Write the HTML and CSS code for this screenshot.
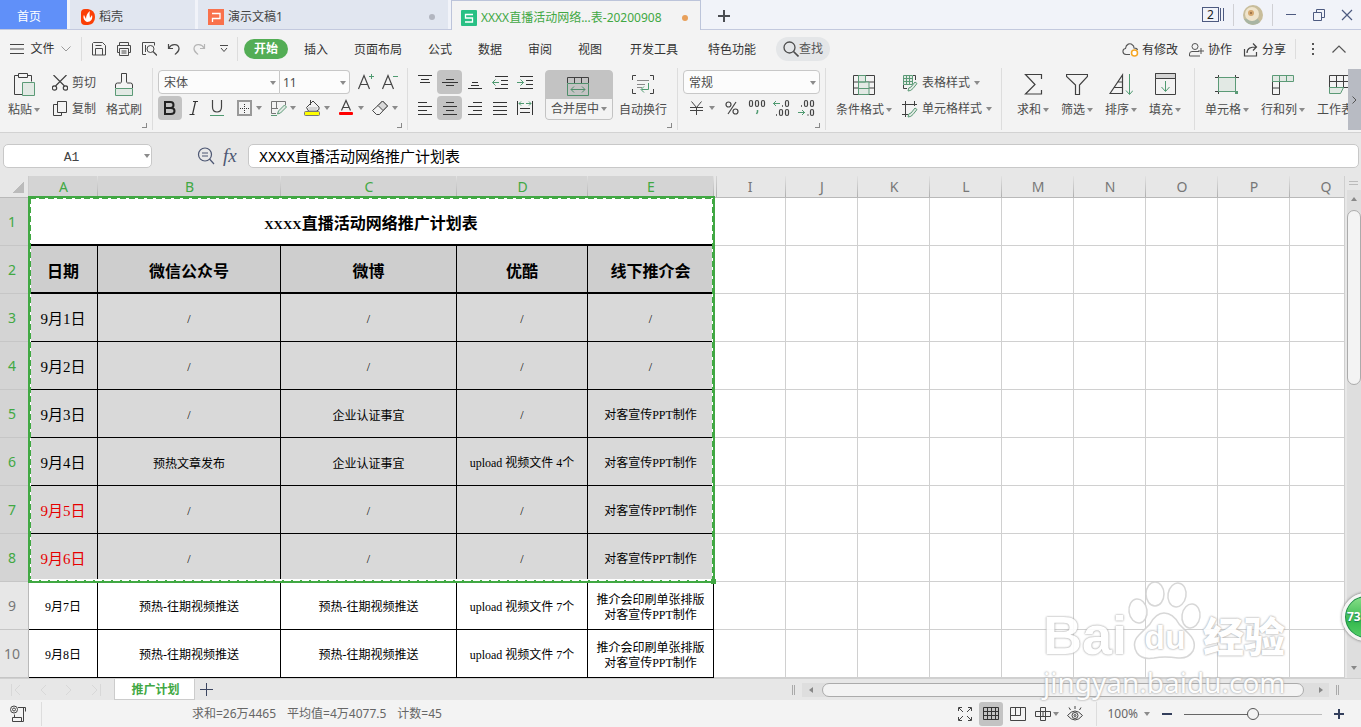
FILE: index.html
```html
<!DOCTYPE html>
<html lang="zh-CN">
<head>
<meta charset="utf-8">
<title>XXXX直播活动网络推广计划表-20200908</title>
<link rel="stylesheet" href="styles.css">
</head>
<body>
<div class="app">

<header class="titlebar">
  <button class="doc home">首页</button>
  <button class="doc docer">
    <svg width="14" height="16" viewBox="0 0 14 16"><path d="M0 4q0-4 4-4h3q7 1 7 8t-7 8H4q-4 0-4-4z" fill="#fb3f07"/><path d="M6 13C2 11 2 7 3 6l2 4c0-3 1-6 4-8-1 3 0 5 0 7l2-3c1 4-1 7-5 7z" fill="#fff"/></svg>
    <span>稻壳</span>
  </button>
  <button class="doc ppt">
    <svg width="16" height="16" viewBox="0 0 16 16"><rect width="16" height="16" fill="#f9714c"/><path d="M4.500 13V9.500h7.500v-5H4" fill="none" stroke="#fff" stroke-width="1.300"/></svg>
    <span>演示文稿1</span><i class="dot"></i>
  </button>
  <button class="doc current">
    <svg width="16" height="16" viewBox="0 0 16 16"><rect width="16" height="16" rx="1" fill="#29c084"/><path d="M12 4.500H4.500v3.500h7v4H4" fill="none" stroke="#fff" stroke-width="1.300"/></svg>
    <span>XXXX直播活动网络...表-20200908</span><i class="dot orange"></i>
  </button>
  <button class="newtab" aria-label="新建"><svg width="12" height="12" viewBox="0 0 12 12"><path d="M6 0v12M0 6h12" stroke="#4b4d52" stroke-width="2"/></svg></button>
  <div class="window">
    <button class="count"><span>2</span><i></i></button>
    <i class="fade"></i>
    <button aria-label="用户"><svg width="20" height="20" viewBox="0 0 20 20"><circle cx="10" cy="10" r="10" fill="#c8bd9b"/><path d="M1 14a10 10 0 0 0 16 3l-3-4z" fill="#a9b5a3"/><circle cx="9" cy="9" r="7" fill="#efe4cc"/><circle cx="8" cy="8" r="3" fill="#d5a870"/><circle cx="8" cy="8" r="1" fill="#8f6742"/></svg></button>
    <i class="fade"></i>
    <button class="win" aria-label="最小化"><svg width="12" height="12" viewBox="0 0 12 12"><path d="M1 5.500h10" stroke="#4d5a80"/></svg></button>
    <button class="win" aria-label="还原"><svg width="12" height="12" viewBox="0 0 12 12"><path d="M.5 3.500h8v8h-8zM3.500 3.500v-3h8v8h-3" fill="none" stroke="#4d5a80"/></svg></button>
    <button class="win" aria-label="关闭"><svg width="12" height="12" viewBox="0 0 12 12"><path d="M1 1l10 10M11 1L1 11" stroke="#4d5a80" stroke-width="1.200"/></svg></button>
  </div>
</header>

<nav class="menu">
  <button class="file">
    <svg width="14" height="10" viewBox="0 0 14 10"><path d="M0 .5h14M0 5h14M0 9.500h14" stroke="#444"/></svg>
    <span>文件</span>
    <svg width="10" height="6" viewBox="0 0 10 6"><path d="M.5.500L5 5 9.500.500" fill="none" stroke="#999"/></svg>
  </button>
  <div class="quick">
    <button aria-label="保存"><svg width="16" height="16" viewBox="0 0 16 16"><path d="M2.500 1.500h9l3 3v9.500h-13V2.500zM4.500 14V7.500h7V14M4.500 4.500h6" fill="none" stroke="#4a4a4a"/></svg></button>
    <button aria-label="打印"><svg width="16" height="16" viewBox="0 0 16 16"><path d="M3.500 4.500v-3h9v3M3.500 11.500h-2v-7h13v7h-2M3.500 7.500h9v7h-9zM5.500 10h5M5.500 12h5" fill="none" stroke="#4a4a4a"/></svg></button>
    <button aria-label="打印预览"><svg width="16" height="16" viewBox="0 0 16 16"><path d="M5 13.500H1.500v-12h12v3M4.500 4v7" fill="none" stroke="#4a4a4a"/><circle cx="9.500" cy="8" r="3.500" fill="none" stroke="#4a4a4a"/><path d="M12 10.500l4 4" stroke="#4a4a4a" stroke-width="1.300"/></svg></button>
    <button aria-label="撤销"><svg width="16" height="16" viewBox="0 0 16 16"><path d="M2.500 3v4.500H7M3 7c2-4 9-5 10 0 .5 4-3 5-4 6.500" fill="none" stroke="#4a4a4a" stroke-width="1.200"/></svg></button>
    <button aria-label="恢复"><svg width="16" height="16" viewBox="0 0 16 16"><path d="M13.500 3v4.500H9M13 7c-2-4-9-5-10 0-.5 4 3 5 4 6.500" fill="none" stroke="#b5b5b5" stroke-width="1.200"/></svg></button>
    <button aria-label="自定义"><svg width="10" height="8" viewBox="0 0 10 8"><path d="M1 .5h8M2 3l3 3.500L8 3" fill="none" stroke="#4a4a4a"/></svg></button>
  </div>
  <div class="tabs">
    <button class="on">开始</button><button>插入</button><button>页面布局</button><button>公式</button><button>数据</button><button>审阅</button><button>视图</button><button class="far">开发工具</button><button class="far">特色功能</button>
  </div>
  <button class="search"><svg width="16" height="16" viewBox="0 0 16 16"><circle cx="6.500" cy="6.500" r="5.500" fill="none" stroke="#4d4d4d" stroke-width="1.300"/><path d="M10.500 10.500l5 5" stroke="#4d4d4d" stroke-width="1.600"/></svg>查找</button>
  <div class="cloud">
    <button><svg width="17" height="15" viewBox="0 0 17 15"><path d="M8 12.500H4C0 12 0 7 3.500 6.500 4 2 8 .5 10.500 3c1 .5 1.500 2 1.500 3q3 0 3.500 2" fill="none" stroke="#555" stroke-width="1.100"/><circle cx="12.500" cy="11" r="3" fill="#fff" stroke="#f5a623" stroke-width="1.500"/></svg>有修改</button>
    <button><svg width="16" height="14" viewBox="0 0 16 14"><circle cx="6" cy="3.500" r="3" fill="none" stroke="#555"/><path d="M10 8.500H3q-2.500 0-2.500 2.500v2H11M12 5v6M9 8h6" fill="none" stroke="#555"/></svg>协作</button>
    <button><svg width="16" height="14" viewBox="0 0 16 14"><path d="M1.500 6v7h12V9M4 10c0-5 4-6 9-6M10 .5L13.500 4 10 7.500" fill="none" stroke="#444" stroke-width="1.200"/></svg>分享</button>
  </div>
  <div class="tail">
    <button aria-label="更多"><svg width="4" height="14" viewBox="0 0 4 14"><path d="M1 1h2v2H1zM1 6h2v2H1zM1 11h2v2H1z" fill="#555"/></svg></button>
    <button aria-label="折叠"><svg width="14" height="8" viewBox="0 0 14 8"><path d="M.5 7.500L7 1l6.500 6.500" fill="none" stroke="#555" stroke-width="1.200"/></svg></button>
  </div>
</nav>

<section class="ribbon">
  <div class="group clip">
    <button class="big paste"><svg width="22" height="26" viewBox="0 0 22 26"><path d="M5.500 3.500h-4v19h8M14.500 3.500h4v6M5.500 1.500h9v4h-9z" fill="none" stroke="#404040"/><path d="M9.500 10.500h12v13h-12z" fill="#e2e9e4" stroke="#5b9a76"/></svg><span>粘贴<i class="caret"></i></span></button>
    <div class="stack">
      <button><svg width="16" height="16" viewBox="0 0 16 16"><path d="M1.500 0l11 11M14.500 0l-11 11" stroke="#404040" stroke-width="1.200"/><circle cx="2.500" cy="13" r="2.200" fill="none" stroke="#404040" stroke-width="1.200"/><circle cx="13.500" cy="13" r="2.200" fill="none" stroke="#404040" stroke-width="1.200"/></svg>剪切</button>
      <button><svg width="16" height="16" viewBox="0 0 16 16"><path d="M5.500.500h9v11h-9zM5.500 3.500h-4v11h8v-3" fill="none" stroke="#404040"/></svg>复制</button>
    </div>
    <button class="big painter"><svg width="20" height="26" viewBox="0 0 20 26"><path d="M1.500 16.500h17v7h-17z" fill="#e2e9e4" stroke="#5b9a76"/><path d="M1.500 16v-3q0-2 2-2h3q1 0 1-2V1.500h5V9q0 2 1 2h3q2 0 2 2v3" fill="none" stroke="#404040"/></svg><span>格式刷</span></button>
    <i class="launch"></i>
  </div>

  <div class="group font">
    <div class="line">
      <label class="pick face"><select aria-label="字体"><option>宋体</option></select></label><label class="pick size"><select aria-label="字号"><option>11</option></select></label>
      <button class="cell grow" aria-label="增大字号"><svg width="18" height="18" viewBox="0 0 18 18"><path d="M1.500 16L7 2.500 12.500 16M3.500 11.500h7" fill="none" stroke="#444" stroke-width="1.200"/><path d="M12 3.500h5M14.500 1v5" stroke="#4f9a70"/></svg></button>
      <button class="cell" aria-label="减小字号"><svg width="18" height="18" viewBox="0 0 18 18"><path d="M1.500 16L7 2.500 12.500 16M3.500 11.500h7" fill="none" stroke="#444" stroke-width="1.200"/><path d="M12 3.500h5" stroke="#4f9a70"/></svg></button>
    </div>
    <div class="line">
      <button class="cell on" aria-label="加粗"><svg width="14" height="16" viewBox="0 0 14 16"><path d="M2 2h5.500q3 0 3 3t-3 3H2zM2 8h6q3.500 0 3.500 3t-3.500 3H2z" fill="none" stroke="#222" stroke-width="2"/></svg></button>
      <button class="cell" aria-label="倾斜"><svg width="14" height="16" viewBox="0 0 14 16"><path d="M6 1.500h5M2.500 14.500h5M8.500 1.500l-3 13" stroke="#333" stroke-width="1.200"/></svg></button>
      <button class="cell" aria-label="下划线"><svg width="16" height="18" viewBox="0 0 16 18"><path d="M2.500 1v7q0 5 4.500 5t4.500-5V1" fill="none" stroke="#444" stroke-width="1.200"/><path d="M0 16.500h14" stroke="#4f9a70"/></svg></button>
      <div class="drops">
        <button aria-label="边框"><svg width="18" height="18" viewBox="0 0 18 18"><path d="M3 2h13v14H3z" fill="none" stroke="#999" stroke-width="2"/><path d="M9.500 5v9M5 9.500h9" stroke="#333" stroke-dasharray="1 1"/></svg><i class="caret"></i></button>
        <button aria-label="绘图边框"><svg width="18" height="18" viewBox="0 0 18 18"><path d="M16.500 6V2.500h-14V14.500H7M7.500 3v7M3 9.500h6" fill="none" stroke="#777"/><path d="M8.500 15l1-3 6-6 2 2-6 6z" fill="#e2e9e4" stroke="#5b9a76"/><path d="M2 16.500h6" stroke="#5b9a76"/></svg><i class="caret"></i></button>
        <button aria-label="填充颜色"><svg width="18" height="18" viewBox="0 0 18 18"><path d="M3.500 8.500L10 2l6 6v2.500L13.500 12h-8zM7.500 1v5" fill="#f3f3f3" stroke="#444"/><path d="M5 8h10l-2 3.500H6z" fill="#d5d5d5"/><rect x="1.500" y="12.500" width="15" height="4" rx="1" fill="#ff0" stroke="#777"/></svg><i class="caret"></i></button>
        <button aria-label="字体颜色"><svg width="18" height="18" viewBox="0 0 18 18"><path d="M4.500 11.500L9 1.500l4.500 10M6 8.500h6" fill="none" stroke="#444" stroke-width="1.200"/><rect x="2" y="13" width="14" height="3" rx="1" fill="#f00"/></svg><i class="caret"></i></button>
        <button aria-label="清除"><svg width="18" height="18" viewBox="0 0 18 18"><path d="M7 6.500L11.500 2l5 5L8.500 15.500H5.500L1.500 11.500z" fill="#f3f3f3" stroke="#444"/><path d="M7 6.500L11.500 2l5 5-4.500 4.500z" fill="#d9d9d9" stroke="#444"/></svg><i class="caret"></i></button>
      </div>
    </div>
    <i class="launch"></i>
  </div>

  <div class="group align">
    <div class="five">
      <button aria-label="顶端对齐"><svg width="16" height="16" viewBox="0 0 16 16"><path d="M1 1.500h14M4 5.500h8M3 8.500h10" stroke="#333"/></svg></button>
      <button class="on" aria-label="垂直居中"><svg width="16" height="16" viewBox="0 0 16 16"><path d="M4 5.500h8M0 8.500h16M4 11.500h8" stroke="#333"/></svg></button>
      <button aria-label="底端对齐"><svg width="16" height="16" viewBox="0 0 16 16"><path d="M5 8.500h6M4 11.500h8M1 14.500h14" stroke="#333"/></svg></button>
      <button aria-label="减少缩进"><svg width="16" height="16" viewBox="0 0 16 16"><path d="M3 2.500h13M9 6.500h7M9 10.500h7M3 14.500h13" stroke="#333"/><path d="M.500 8.500H7M3.500 5.500l-3 3 3 3" fill="none" stroke="#4f9a70"/></svg></button>
      <button aria-label="增加缩进"><svg width="16" height="16" viewBox="0 0 16 16"><path d="M3 2.500h13M9 6.500h7M9 10.500h7M3 14.500h13" stroke="#333"/><path d="M0 8.500h6.500M3.500 5.500l3 3-3 3" fill="none" stroke="#4f9a70"/></svg></button>
      <button aria-label="左对齐"><svg width="16" height="16" viewBox="0 0 16 16"><path d="M1 2.500h9M1 6.500h14M1 10.500h9M1 14.500h14" stroke="#333"/></svg></button>
      <button class="on" aria-label="水平居中"><svg width="16" height="16" viewBox="0 0 16 16"><path d="M4 2.500h8M1 6.500h14M4 10.500h8M1 14.500h14" stroke="#333"/></svg></button>
      <button aria-label="右对齐"><svg width="16" height="16" viewBox="0 0 16 16"><path d="M6 2.500h9M1 6.500h14M6 10.500h9M1 14.500h14" stroke="#333"/></svg></button>
      <button aria-label="两端对齐"><svg width="16" height="16" viewBox="0 0 16 16"><path d="M1 2.500h14M1 6.500h14M1 10.500h14M1 14.500h14" stroke="#333"/></svg></button>
      <button aria-label="分散对齐"><svg width="16" height="16" viewBox="0 0 16 16"><path d="M.500 1v14M15.500 1v14M3 8.500h10M3 12.500h10" stroke="#333"/><path d="M2 3.500h5M9 3.500h5M4 1.500l-2 2 2 2M12 1.500l2 2-2 2" fill="none" stroke="#4f9a70"/></svg></button>
    </div>
    <button class="merge"><span class="top"><svg width="24" height="22" viewBox="0 0 24 22"><path d="M.500 7V1.500h21V7M7.500 2v5M14.500 2v5" fill="none" stroke="#404040"/><path d="M.500 7.500h21v12H.500zM4 13.500h14M7 10.500l-3 3 3 3M15 10.500l3 3-3 3" fill="none" stroke="#4f8f6b"/></svg></span><span class="cap">合并居中<i class="caret"></i></span></button>
    <button class="big wrap"><svg width="24" height="26" viewBox="0 0 24 26"><path d="M5 3.500H1.500V8M19 3.500h3.500V8M5 21.500H1.500V17M19 21.500h3.500V17" fill="none" stroke="#404040"/><path d="M6 8.500h12M6 12.500h8M6 15.500h5" stroke="#888"/><path d="M17.500 11v6.500h-7M13 14.500l-3 3 3 3" fill="none" stroke="#4f9a70"/></svg><span>自动换行</span></button>
    <i class="launch"></i>
  </div>

  <div class="group number">
    <div class="line"><label class="pick fmt"><select aria-label="数字格式"><option>常规</option></select></label></div>
    <div class="line nums">
      <button class="yen" aria-label="货币"><svg width="18" height="18" viewBox="0 0 18 18"><path d="M3.500 2.500l5 6M13.500 2.500l-5 6M2 8.500h13M2 11.500h13M8.500 8.500V16" fill="none" stroke="#444"/></svg><i class="caret"></i></button>
      <button class="cell" aria-label="百分比"><svg width="14" height="14" viewBox="0 0 14 14"><circle cx="3.500" cy="3.500" r="2.500" fill="none" stroke="#444" stroke-width="1.200"/><circle cx="10.500" cy="10.500" r="2.500" fill="none" stroke="#444" stroke-width="1.200"/><path d="M11 1L3 13" stroke="#444" stroke-width="1.200"/></svg></button>
      <button class="cell" aria-label="千位分隔"><svg width="18" height="18" viewBox="0 0 18 18"><rect x="1.500" y="1.500" width="3" height="6" rx="1.500" fill="none" stroke="#444" stroke-width="1.200"/><rect x="7.500" y="1.500" width="3" height="6" rx="1.500" fill="none" stroke="#444" stroke-width="1.200"/><rect x="13.500" y="1.500" width="3" height="6" rx="1.500" fill="none" stroke="#444" stroke-width="1.200"/><path d="M9.500 11v2l-1 2" fill="none" stroke="#4f9a70" stroke-width="1.500"/></svg></button>
      <button class="cell" aria-label="增加小数位"><svg width="18" height="18" viewBox="0 0 18 18"><g fill="none" stroke="#444" stroke-width="1.200"><rect x="12.500" y="1.500" width="3" height="6" rx="1.500"/><rect x="6.500" y="10.500" width="3" height="6" rx="1.500"/><rect x="12.500" y="10.500" width="3" height="6" rx="1.500"/></g><path d="M9 7h1M3 16h1" stroke="#444" stroke-width="1.500"/><path d="M0 4.500h7M3 2L.500 4.500 3 7" fill="none" stroke="#4f9a70"/></svg></button>
      <button class="cell" aria-label="减少小数位"><svg width="18" height="18" viewBox="0 0 18 18"><g fill="none" stroke="#444" stroke-width="1.200"><rect x="6.500" y="1.500" width="3" height="6" rx="1.500"/><rect x="12.500" y="1.500" width="3" height="6" rx="1.500"/><rect x="12.500" y="10.500" width="3" height="6" rx="1.500"/></g><path d="M3 7h1M9.500 16h1" stroke="#444" stroke-width="1.500"/><path d="M0 13.500h7M4 11l2.500 2.500L4 16" fill="none" stroke="#4f9a70"/></svg></button>
    </div>
    <i class="launch"></i>
  </div>

  <div class="group style">
    <button class="big cond"><svg width="22" height="24" viewBox="0 0 22 24"><path d="M.500 2.500h21v19H.500zM0 9h22M0 15h22M5.500 2v20M12.500 2v20" fill="#f3f3f3" stroke="#404040"/><path d="M5.500 2.500h7V9h-7zM5.500 9H16v6.500H5.500zM5.500 15.500H16v6H5.500z" fill="#e2e9e4" stroke="#5b9a76"/></svg><span>条件格式<i class="caret"></i></span></button>
    <div class="stack">
      <button><svg width="16" height="17" viewBox="0 0 16 17"><path d="M1.500.500h9v9h-9zM1.500 3.500h9M1.500 6.500h9M4.500.500v9M7.500.500v9" fill="#e2e9e4" stroke="#5b9a76"/><path d="M11 .500h2.500V5M1.500 10v3.500H5" fill="none" stroke="#404040"/><path d="M6 16q0-4 3-4l4-5 2 1.500-4 5Q9 16 6 16z" fill="#e2e9e4" stroke="#5b9a76"/></svg>表格样式<i class="caret"></i></button>
      <button><svg width="16" height="17" viewBox="0 0 16 17"><path d="M3.500 0v16M0 3.500h15M12.500 0v5M0 13.500h6" fill="none" stroke="#404040"/><path d="M6 16q0-4 3-4l4-5 2 1.500-4 5Q9 16 6 16z" fill="#e2e9e4" stroke="#5b9a76"/></svg>单元格样式<i class="caret"></i></button>
    </div>
  </div>

  <div class="group edit">
    <button class="big"><svg width="22" height="26" viewBox="0 0 22 26"><path d="M19.500 7V2.500h-16L13 12.500l-9.500 9.500h16v-4" fill="none" stroke="#404040" stroke-width="1.200"/></svg><span>求和<i class="caret"></i></span></button>
    <button class="big"><svg width="22" height="26" viewBox="0 0 22 26"><path d="M.500 2.500h21v2L13.500 13v9.500h-4V13L.500 4.500z" fill="none" stroke="#404040" stroke-width="1.200"/></svg><span>筛选<i class="caret"></i></span></button>
    <button class="big"><svg width="24" height="26" viewBox="0 0 24 26"><path d="M1 21.500L13.500 3v18.500zM9 10h4.500M5 15.500h8.500" fill="none" stroke="#404040" stroke-width="1.200"/><path d="M20.500 2v20M17 18.500l3.500 4 3.500-4" fill="none" stroke="#4f9a70"/></svg><span>排序<i class="caret"></i></span></button>
    <button class="big"><svg width="22" height="26" viewBox="0 0 22 26"><path d="M1.500 1.500h20v21h-20z" fill="none" stroke="#404040"/><path d="M1.500 1.500h20v5h-20z" fill="#d5d5d5" stroke="#404040"/><path d="M11.500 9v10M7.500 15l4 4.500 4-4.500" fill="none" stroke="#4f9a70"/></svg><span>填充<i class="caret"></i></span></button>
  </div>

  <div class="group cells">
    <button class="big"><svg width="24" height="26" viewBox="0 0 24 26"><path d="M3.500 3v19M20.500 3v4M0 5.500h24M0 19.500h5" fill="none" stroke="#404040"/><path d="M3.500 5.500h17v14h-17z" fill="#e2e9e4" stroke="#5b9a76"/><path d="M20 19h3v3h-3z" fill="#5b9a76"/></svg><span>单元格<i class="caret"></i></span></button>
    <button class="big"><svg width="24" height="26" viewBox="0 0 24 26"><path d="M1.500 9.500h7v13h-7zM1.500 16h7" fill="none" stroke="#404040"/><path d="M1.500 3.500h21v6h-21zM8.500 3.500v6M15.500 3.500v6" fill="#e2e9e4" stroke="#5b9a76"/></svg><span>行和列<i class="caret"></i></span></button>
    <button class="big"><svg width="24" height="26" viewBox="0 0 24 26"><path d="M2.500 3.500h20v12h-20zM2.500 9.500h20M9.500 3.500v12M16.500 3.500v12" fill="none" stroke="#404040"/><path d="M2.500 15.500h14l-3 6h-11z" fill="#e2e9e4" stroke="#5b9a76"/></svg><span>工作表<i class="caret"></i></span></button>
  </div>
  <button class="more" aria-label="更多功能"><svg width="5" height="8" viewBox="0 0 5 8"><path d="M.500.500L4 4 .500 7.500" fill="none" stroke="#555"/></svg></button>
</section>

<section class="formula">
  <label class="name"><input aria-label="名称框" value="A1"><i class="caret"></i></label>
  <div class="fn">
    <button aria-label="搜索"><svg width="18" height="18" viewBox="0 0 18 18"><circle cx="8" cy="7.500" r="6.500" fill="none" stroke="#4d5773" stroke-width="1.200"/><path d="M5 6h6M5 9h6M12.500 12l4.500 5" stroke="#4d5773" stroke-width="1.200"/></svg></button>
    <button class="fx">fx</button>
  </div>
  <input class="content" aria-label="编辑栏" value="XXXX直播活动网络推广计划表">
</section>

<main class="work">
  <div class="sheet">
    <table>
      <colgroup><col class="c0"><col class="ca"><col class="cb"><col class="cc"><col class="cd"><col class="ce"><col span="9" class="cx"></colgroup>
      <thead><tr><th class="corner"></th><th class="sel">A</th><th class="sel">B</th><th class="sel">C</th><th class="sel">D</th><th class="sel">E</th><th class="skip">I</th><th>J</th><th>K</th><th>L</th><th>M</th><th>N</th><th>O</th><th>P</th><th>Q</th></tr></thead>
      <tbody>
      <tr class="caption"><th class="sel">1</th><td class="t" colspan="5"><b>XXXX</b>直播活动网络推广计划表</td><td></td><td></td><td></td><td></td><td></td><td></td><td></td><td></td><td></td></tr>
      <tr class="heads"><th class="sel">2</th><td class="t">日期</td><td class="t">微信公众号</td><td class="t">微博</td><td class="t">优酷</td><td class="t">线下推介会</td><td></td><td></td><td></td><td></td><td></td><td></td><td></td><td></td><td></td></tr>
      <tr class="fill"><th class="sel">3</th><td class="t date"><b>9</b>月<b>1</b>日</td><td class="t"><b>/</b></td><td class="t"><b>/</b></td><td class="t"><b>/</b></td><td class="t"><b>/</b></td><td></td><td></td><td></td><td></td><td></td><td></td><td></td><td></td><td></td></tr>
      <tr class="fill"><th class="sel">4</th><td class="t date"><b>9</b>月<b>2</b>日</td><td class="t"><b>/</b></td><td class="t"><b>/</b></td><td class="t"><b>/</b></td><td class="t"><b>/</b></td><td></td><td></td><td></td><td></td><td></td><td></td><td></td><td></td><td></td></tr>
      <tr class="fill"><th class="sel">5</th><td class="t date"><b>9</b>月<b>3</b>日</td><td class="t"><b>/</b></td><td class="t">企业认证事宜</td><td class="t"><b>/</b></td><td class="t">对客宣传<b>PPT</b>制作</td><td></td><td></td><td></td><td></td><td></td><td></td><td></td><td></td><td></td></tr>
      <tr class="fill"><th class="sel">6</th><td class="t date"><b>9</b>月<b>4</b>日</td><td class="t">预热文章发布</td><td class="t">企业认证事宜</td><td class="t"><b>upload </b>视频文件<b> 4</b>个</td><td class="t">对客宣传<b>PPT</b>制作</td><td></td><td></td><td></td><td></td><td></td><td></td><td></td><td></td><td></td></tr>
      <tr class="fill"><th class="sel">7</th><td class="t date red"><b>9</b>月<b>5</b>日</td><td class="t"><b>/</b></td><td class="t"><b>/</b></td><td class="t"><b>/</b></td><td class="t">对客宣传<b>PPT</b>制作</td><td></td><td></td><td></td><td></td><td></td><td></td><td></td><td></td><td></td></tr>
      <tr class="fill"><th class="sel">8</th><td class="t date red"><b>9</b>月<b>6</b>日</td><td class="t"><b>/</b></td><td class="t"><b>/</b></td><td class="t"><b>/</b></td><td class="t">对客宣传<b>PPT</b>制作</td><td></td><td></td><td></td><td></td><td></td><td></td><td></td><td></td><td></td></tr>
      <tr><th>9</th><td class="t"><b>9</b>月<b>7</b>日</td><td class="t">预热<b>-</b>往期视频推送</td><td class="t">预热<b>-</b>往期视频推送</td><td class="t"><b>upload </b>视频文件<b> 7</b>个</td><td class="t">推介会印刷单张排版<br>对客宣传<b>PPT</b>制作</td><td></td><td></td><td></td><td></td><td></td><td></td><td></td><td></td><td></td></tr>
      <tr><th>10</th><td class="t"><b>9</b>月<b>8</b>日</td><td class="t">预热<b>-</b>往期视频推送</td><td class="t">预热<b>-</b>往期视频推送</td><td class="t"><b>upload </b>视频文件<b> 7</b>个</td><td class="t">推介会印刷单张排版<br>对客宣传<b>PPT</b>制作</td><td></td><td></td><td></td><td></td><td></td><td></td><td></td><td></td><td></td></tr>
      </tbody>
    </table>
    <div class="marquee"></div>
  </div>
  <div class="vscroll">
    <i class="split"></i>
    <div class="track"><i class="up"></i><i class="thumb"></i><i class="down"></i></div>
  </div>
</main>

<footer class="sheetbar">
  <div class="navs">
    <svg width="10" height="12" viewBox="0 0 10 12"><path d="M.500 0v12M9 1L4 6l5 5" fill="none" stroke="#d8d8d8"/></svg>
    <svg width="8" height="12" viewBox="0 0 8 12"><path d="M7 1L2 6l5 5" fill="none" stroke="#d8d8d8"/></svg>
    <svg width="8" height="12" viewBox="0 0 8 12"><path d="M1 1l5 5-5 5" fill="none" stroke="#d8d8d8"/></svg>
    <svg width="10" height="12" viewBox="0 0 10 12"><path d="M9.500 0v12M1 1l5 5-5 5" fill="none" stroke="#d8d8d8"/></svg>
  </div>
  <button class="sheettab">推广计划</button>
  <button class="addsheet" aria-label="新建工作表"><svg width="13" height="13" viewBox="0 0 13 13"><path d="M6.500 0v13M0 6.500h13" stroke="#3b4560"/></svg></button>
  <div class="hscroll"><i class="grip"></i><div class="track"><i class="left"></i><i class="thumb"></i><i class="right"></i></div><i class="grip"></i></div>
</footer>

<footer class="status">
  <button class="macro" aria-label="宏"><svg width="16" height="18" viewBox="0 0 16 18"><circle cx="4" cy="4.500" r="3.500" fill="none" stroke="#444"/><circle cx="4" cy="4.500" r="1.500" fill="none" stroke="#444"/><path d="M8 2.500h7.500v4M13.500 3v9M4.500 9.500v3M2.500 12.500h9v4h-9zM11 16.500h2.500V12" fill="none" stroke="#444"/></svg></button>
  <div class="sums"><span>求和=26万4465</span><span>平均值=4万4077.5</span><span>计数=45</span></div>
  <div class="views">
    <button class="full" aria-label="全屏"><svg width="14" height="14" viewBox="0 0 14 14"><path d="M.500 4V.500H4M10 .500h3.500V4M13.500 10v3.500H10M4 13.500H.500V10M1 1l4 4M13 1L9 5M13 13L9 9M1 13l4-4" fill="none" stroke="#444"/></svg></button>
    <button class="on" aria-label="普通视图"><svg width="16" height="14" viewBox="0 0 16 14"><path d="M.500.500h15v12h-15zM.500 4.500h15M.500 8.500h15M4.500.500v12M8.500.500v12M12.500.500v12" fill="none" stroke="#333"/></svg></button>
    <button aria-label="分页预览"><svg width="16" height="14" viewBox="0 0 16 14"><path d="M.500.500h15v13h-15zM5.500.500v8M10.500.500v8M.500 8.500h10" fill="none" stroke="#444"/></svg></button>
    <button class="read" aria-label="阅读模式"><svg width="16" height="14" viewBox="0 0 16 14"><path d="M.500 4.500h15v5H.500zM5.500.500h5v13h-5zM8 4v6" fill="none" stroke="#444"/></svg><i class="caret"></i></button>
    <button aria-label="护眼模式"><svg width="16" height="16" viewBox="0 0 16 16"><path d="M.500 9.500q7.500-9 15 0-7.500 9-15 0zM8 0v3M2 1.500l1.500 2.500M14 1.500L12.500 4" fill="none" stroke="#444"/><circle cx="8" cy="9.500" r="3" fill="none" stroke="#444"/><circle cx="8" cy="9.500" r="1" fill="none" stroke="#444"/></svg></button>
  </div>
  <div class="zoom">
    <button class="pct">100%<i class="caret"></i></button>
    <button aria-label="缩小"><svg width="10" height="10" viewBox="0 0 10 10"><path d="M0 5h10" stroke="#333f5c" stroke-width="2"/></svg></button>
    <input type="range" min="0" max="200" value="100" aria-label="缩放">
    <button aria-label="放大"><svg width="10" height="10" viewBox="0 0 10 10"><path d="M0 5h10M5 0v10" stroke="#333f5c" stroke-width="2"/></svg></button>
  </div>
</footer>

<div class="mark">
  <div class="brand"><span class="bai">Bai</span>
    <span class="paw"><svg width="76" height="80" viewBox="0 0 76 80"><g fill="#fff" stroke="#d3d3d3" stroke-width="1.500"><ellipse cx="28" cy="14" rx="9" ry="12"/><ellipse cx="50" cy="15" rx="9" ry="12" transform="rotate(10 50 15)"/><ellipse cx="11" cy="31" rx="9" ry="12" transform="rotate(-8 11 31)"/><ellipse cx="64" cy="36" rx="9" ry="12" transform="rotate(8 64 36)"/><path d="M37 33q9 0 15 11l10 10q8 8 4 17-5 8-15 7-14-2-24 0-12 2-17-5-6-10 2-18l11-11q6-11 14-11z"/></g></svg><em>du</em></span>
    <span class="jy">经验</span></div>
  <div class="url">jingyan.baidu.com</div>
</div>
<button class="ball">73</button>
</div>
</body>
</html>
```

FILE: styles.css
```css
* { box-sizing: border-box; }
body { margin: 0; }
button { border: 0; background: none; padding: 0; margin: 0; font: inherit; color: inherit; display: flex; align-items: center; justify-content: center; white-space: nowrap; }
svg { display: block; flex: none; }
select, input { font: inherit; color: inherit; }
i { font-style: normal; flex: none; }

.app { position: relative; display: flex; flex-direction: column; height: 100vh; overflow: hidden; background: #f3f3f3; color: #444; font: 12px/16px "Noto Sans", "Noto Sans CJK SC", sans-serif; }
.caret { display: inline-block; border: 3px solid transparent; border-top: 4px solid #8b8b8b; border-bottom: 0; }

/* title bar */
.titlebar { display: flex; height: 30px; flex: none; background: #f1f3f9; border-bottom: 1px solid #c3c9de; }
.doc { background: #e1e6f0; justify-content: flex-start; padding: 4px 0 0; height: 29px; }
.doc span { margin-left: 4px; }
.home { width: 67px; background: #6090f9; color: #fff; justify-content: center; padding-right: 9px; }
.docer { width: 125px; margin-left: 3px; padding-left: 11px; }
.ppt { width: 250px; margin-left: 3px; padding-left: 10px; }
.current { width: 250px; height: 30px; margin-left: 3px; padding-left: 9px; background: #f3f3f3; color: #41a843; border: 1px solid #bcc4da; border-bottom: 0; }
.dot { width: 6px; height: 6px; border-radius: 3px; background: #b2b6c0; margin: 0 13px 0 auto; }
.orange { background: #e8a05a; margin-right: 12px; }
.newtab { width: 46px; padding-top: 3px; }
.window { margin-left: auto; display: flex; align-items: center; gap: 9px; padding-right: 8px; }
.count { color: #222; }
.count span { width: 17px; height: 15px; border: 1px solid #4d5a80; line-height: 13px; }
.count i { width: 4px; height: 13px; margin-left: 1px; border: solid #4d5a80; border-width: 0 1px; }
.fade { width: 1px; height: 22px; background: #d0d0d4; }
.win { width: 12px; margin-left: 3px; }
.win + .win { margin-left: 7px; }

/* menu row */
.menu { display: flex; align-items: center; height: 38px; flex: none; color: #333; }
.file { width: 82px; height: 24px; gap: 6px; border-right: 1px solid #ddd; }
.quick { display: flex; width: 156px; height: 24px; padding-left: 4px; border-right: 1px solid #ddd; }
.quick button { width: 25px; }
.tabs { display: flex; margin-left: 6px; }
.tabs button { padding: 1px 13px 0; height: 20px; }
.tabs .on { background: #53ad55; color: #fff; font-weight: 700; width: 44px; padding: 0; margin-right: 3px; border-radius: 10px; }
.tabs .far { padding: 1px 15px 0; }
.search { width: 54px; height: 24px; margin-left: 5px; border-radius: 12px; background: #e4e6e8; color: #555; }
.cloud { display: flex; gap: 11px; margin-left: auto; padding-top: 1px; }
.cloud button { gap: 3px; }
.tail { display: flex; height: 20px; align-items: center; gap: 17px; margin-left: 9px; padding: 0 15px; border-left: 1px solid #ddd; }

/* ribbon */
.ribbon { position: relative; display: flex; height: 65px; flex: none; overflow: hidden; border-bottom: 1px solid #d2d2d2; color: #4c4c4c; }
.group { position: relative; flex: none; display: flex; height: 62px; padding-top: 2px; border-right: 1px solid #ddd; }
.launch { position: absolute; right: 5px; bottom: 2px; width: 5px; height: 5px; border: solid #888; border-width: 0 1px 1px 0; }
.big { flex-direction: column; justify-content: flex-start; height: 50px; }
.big svg { height: 26px; margin: 2px 0 4px; }
.big span { display: flex; align-items: center; gap: 2px; }
.stack { display: flex; flex-direction: column; gap: 2px; padding-top: 1px; }
.stack button { height: 24px; gap: 4px; justify-content: flex-start; }
.line { display: flex; height: 24px; align-items: center; }
.cell { width: 24px; height: 24px; border-radius: 4px; flex: none; }
.on.cell, .five .on { background: #c3c3c3; border-radius: 4px; }
.clip { width: 153px; padding-left: 4px; }
.paste { width: 40px; }
.clip .stack { margin-left: 8px; width: 49px; }
.painter { width: 46px; }
.font { width: 255px; padding-left: 5px; flex-direction: column; gap: 2px; }
.pick { position: relative; display: block; height: 24px; border: 1px solid #c8c8c8; background: #fcfcfc; }
.pick select { appearance: none; border: 0; background: none; width: 100%; height: 22px; padding: 1px 0 0 5px; outline: 0; }
.pick::after { content: ""; position: absolute; right: 3px; top: 10px; border: 3px solid transparent; border-top: 4px solid #8b8b8b; border-bottom: 0; pointer-events: none; }
.face { width: 122px; border-radius: 4px 0 0 4px; }
.size { width: 70px; border-left: 0; border-radius: 0 4px 4px 0; }
.size select { padding-left: 3px; }
.grow { margin-left: 4px; }
.drops { display: flex; margin-left: 5px; }
.drops button { width: 34px; gap: 3px; justify-content: flex-start; }
.align { width: 270px; padding-left: 4px; }
.five { display: grid; grid-template-columns: repeat(5, 25px); grid-auto-rows: 24px; row-gap: 2px; height: 50px; }
.merge { width: 68px; height: 50px; margin-left: 8px; flex-direction: column; border-radius: 4px; border: 1px solid #c3c3c3; background: #c3c3c3; }
.merge .top { flex: 1; display: flex; align-items: center; padding-top: 4px; }
.merge .cap { display: flex; align-items: center; justify-content: center; gap: 2px; width: 66px; height: 20px; background: #f3f3f3; border-radius: 0 0 3px 3px; }
.wrap { width: 60px; }
.number { width: 148px; padding-left: 5px; flex-direction: column; gap: 2px; }
.fmt { width: 137px; border-radius: 4px; }
.yen { width: 36px; gap: 3px; }
.nums .cell { width: 25px; }
.style { width: 176px; }
.cond { width: 76px; }
.edit { width: 193px; padding-left: 9px; }
.edit .big { width: 44px; }
.cells { border: 0; padding-left: 4px; }
.cells .big { width: 56px; }
.more { position: absolute; right: 0; top: 1px; width: 13px; height: 61px; background: #b8bbc3; }

/* formula bar */
.formula { display: flex; height: 43px; flex: none; padding: 11px 2px 8px 3px; background: #e7e7e7; }
.name { position: relative; width: 149px; }
.name input { width: 100%; height: 24px; border: 1px solid #c8c8c8; border-radius: 5px; padding: 2px 12px 0 0; text-align: center; font: 13px "Liberation Mono", monospace; }
.name .caret { position: absolute; right: 2px; top: 10px; }
.fn { width: 96px; display: flex; gap: 8px; padding-left: 45px; }
.fx { font: italic 19px/20px "Liberation Serif", serif; color: #4d5773; }
.content { flex: 1; min-width: 0; height: 24px; border: 1px solid #c8c8c8; border-radius: 5px; padding: 0 10px; color: #000; font: 15px "Liberation Mono", "Noto Sans CJK SC", monospace; }

/* sheet */
.work { display: flex; flex: 1; min-height: 0; background: #e7e7e7; }
.sheet { position: relative; flex: 1; min-width: 0; overflow: hidden; background: #fff; border-right: 1px solid #d0d0d0; }
table { width: 1362px; table-layout: fixed; border-collapse: separate; border-spacing: 0; }
.c0 { width: 29px; } .ca { width: 69px; } .cb { width: 183px; } .cc { width: 176px; } .cd { width: 131px; } .ce { width: 126px; } .cx { width: 72px; }
th { padding: 0; font: 14px/18px "Noto Sans", sans-serif; color: #777; background: #e7e7e7; }
thead th { height: 22px; border-bottom: 1px solid #b9b9b9; background: linear-gradient(#e2e2e2, #b0b0b0) right / 1px 100% no-repeat #e7e7e7; }
thead th.sel { background-color: #d4d4d4; }
thead th.skip { background: linear-gradient(#e2e2e2, #b0b0b0) right / 1px 100% no-repeat, linear-gradient(#d4d4d4, #b0b0b0) 2px 0 / 1px 100% no-repeat #e7e7e7; }
thead th.corner { background: linear-gradient(135deg, transparent 50%, #bbb 50%) 12px 5px / 12px 12px no-repeat #e7e7e7; border-right: 1px solid #ccc; }
tbody th { height: 48px; padding-right: 4px; border-right: 1px solid #b9b9b9; border-bottom: 1px solid #c6c6c6; }
th.sel { color: #41a843; background-color: #d4d4d4; }
td { height: 48px; padding: 0; border: solid #d0d0d0; border-width: 0 1px 1px 0; }
.t { border-color: #000; color: #000; text-align: center; padding-top: 2px; font: 12px/15px "Noto Sans CJK SC", sans-serif; }
.t b { font-family: "Liberation Serif", serif; font-weight: inherit; white-space: pre; }
.caption .t, .heads .t { border-bottom-width: 2px; font-size: 16px; font-weight: 700; }
.caption .t { padding-top: 4px; }
.caption .t b { font-size: 13px; }
.heads .t { background: #cecece; }
.fill .t { background: #d9d9d9; }
.t.date { font-size: 15px; }
.red { color: #e60000; }
.marquee { position: absolute; left: 28px; top: 20px; width: 687px; height: 387px; border: 2px solid #41a843; pointer-events: none;
  background:
    repeating-linear-gradient(90deg, #41a843 0 6px, #fff 6px 9px) 0 0 / 100% 1px no-repeat,
    repeating-linear-gradient(90deg, #41a843 0 2px, #fff 2px 9px) 0 100% / 100% 1px no-repeat,
    linear-gradient(#fff, #fff) 0 calc(100% - 1px) / 100% 1px no-repeat,
    repeating-linear-gradient(#41a843 0 6px, #fff 6px 9px) 0 0 / 1px 100% no-repeat,
    repeating-linear-gradient(#41a843 0 6px, #fff 6px 9px) 100% 0 / 1px 100% no-repeat; }
.marquee::after { content: ""; position: absolute; right: -3px; bottom: -3px; width: 5px; height: 5px; background: #41a843; }

.vscroll { width: 16px; padding-left: 2px; display: flex; flex-direction: column; }
.split { height: 4px; margin: 5px 3px 5px 2px; border: solid #bbb; border-width: 1px 0; }
.track { background: #dedede; display: flex; align-items: center; flex: 1; }
.vscroll .track { flex-direction: column; }
.up, .down, .left, .right { border: 3px solid transparent; }
.up { border-bottom: 4px solid #888; border-top: 0; margin: 7px 0 9px; }
.down { border-top: 4px solid #888; border-bottom: 0; margin: auto 0 8px; }
.thumb { background: #f3f3f3; border: 1px solid #ababab; border-radius: 7px; }
.vscroll .thumb { width: 14px; height: 175px; }

/* sheet tabs */
.sheetbar { display: flex; align-items: center; height: 22px; flex: none; background: #e7e7e7; border-top: 1px solid #d0d0d0; }
.navs { display: flex; width: 114px; padding-left: 11px; gap: 18px; }
.sheettab { width: 81px; height: 21px; padding: 1px 0 0 2px; background: #fff; border: solid #ccc; border-width: 0 1px 1px; color: #41a843; font-weight: 700; }
.addsheet { width: 23px; }
.hscroll { display: flex; align-items: center; width: 547px; margin-left: auto; margin-right: 22px; gap: 7px; }
.grip { width: 3px; height: 10px; border: solid #aaa; border-width: 0 1px; }
.hscroll .track { height: 14px; }
.hscroll .thumb { flex: 1; height: 14px; }
.left { border-right: 4px solid #888; border-left: 0; margin: 0 9px 0 7px; }
.right { border-left: 4px solid #888; border-right: 0; margin: 0 6px 0 15px; }

/* status bar */
.status { display: flex; align-items: center; height: 27px; flex: none; color: #666; padding-top: 1px; }
.macro { width: 42px; height: 24px; padding-right: 6px; border-right: 1px solid #ddd; }
.sums { display: flex; gap: 11px; margin-left: 150px; }
.views { display: flex; align-items: center; margin-left: auto; gap: 3px; height: 24px; padding-right: 9px; border-right: 1px solid #ddd; }
.views button { width: 24px; height: 24px; }
.views .full { width: 22px; }
.views .on { background: #c3c3c3; border-radius: 3px; }
.views .read { width: 27px; gap: 2px; }
.zoom { display: flex; align-items: center; gap: 12px; padding: 0 17px 0 10px; }
.pct { gap: 6px; }
.zoom input { appearance: none; width: 138px; height: 14px; margin: 0; background: linear-gradient(90deg, #666 50%, #bbb 50%) center / 100% 1px no-repeat; }
.zoom input::-webkit-slider-thumb { appearance: none; width: 12px; height: 12px; border-radius: 6px; border: 1px solid #555; background: #f3f3f3; }

/* floating watermark and meter */
.mark { position: absolute; right: 70px; bottom: 28px; width: 248px; color: #fff; opacity: .9; pointer-events: none; text-shadow: 0 0 2px #aaa, 0 0 2px #aaa; }
.brand { display: flex; align-items: flex-end; height: 82px; margin-bottom: 5px; }
.bai { font: 700 54px/50px "Liberation Sans", sans-serif; }
.paw { position: relative; }
.paw em { position: absolute; left: 0; right: 0; bottom: 5px; text-align: center; font: 700 34px/36px "Liberation Sans", sans-serif; }
.jy { font: 900 41px/52px "Noto Sans CJK SC", sans-serif; }
.url { font: 28px/34px "Noto Sans", sans-serif; }
.ball { position: absolute; left: calc(100% - 19px); bottom: 86px; width: 48px; height: 48px; border-radius: 24px; border: 3px solid #f5f5f5; background: linear-gradient(#8be08b, #35b84d 60%, #55cf68); box-shadow: 0 0 3px #666, inset 0 0 0 1px #1f8a4c; color: #fff; font-weight: 700; font-size: 12px; justify-content: flex-start; padding-left: 2px; text-shadow: 0 1px 1px #175; }
```
